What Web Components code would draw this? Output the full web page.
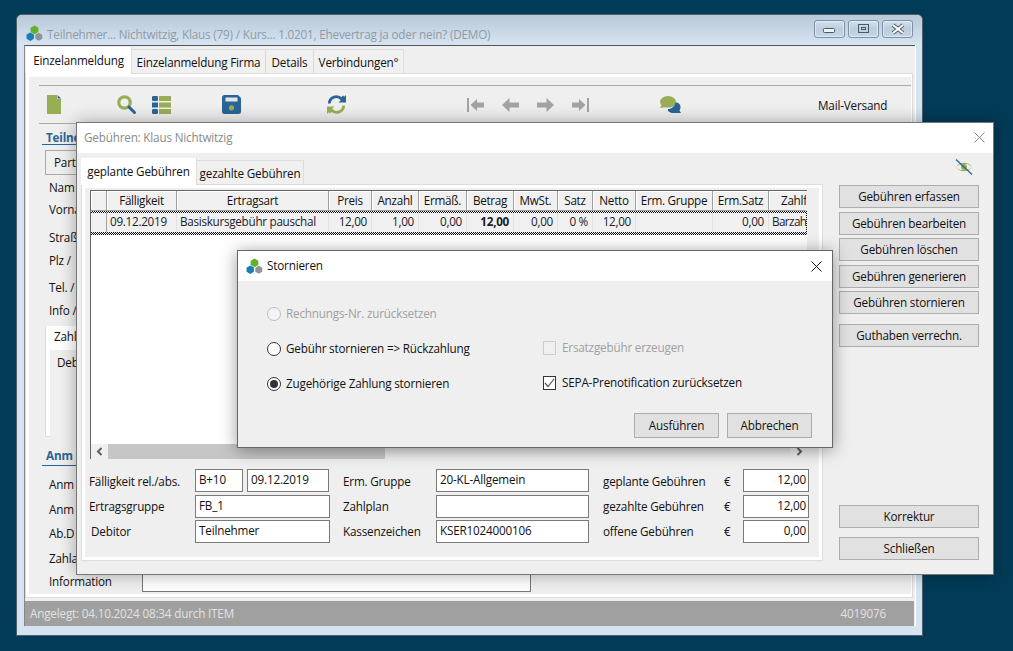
<!DOCTYPE html>
<html lang="de"><head><meta charset="utf-8"><title>Teilnehmer</title>
<style>
html,body{margin:0;padding:0;background:#023b57}
body{font:11.7px/16px "Open Sans","Noto Sans",sans-serif;letter-spacing:-.18px;color:#111}
</style></head><body>
<x-desktop>
  <main-window slot="w" style="left:16px;top:14px;width:907px;height:622px" heading="Teilnehmer... Nichtwitzig, Klaus (79) / Kurs... 1.0201, Ehevertrag ja oder nein? (DEMO)">
    <x-tabs>
      <x-tab active w="106">Einzelanmeldung</x-tab><x-tab w="134">Einzelanmeldung Firma</x-tab><x-tab w="48">Details</x-tab><x-tab w="90">Verbindungen°</x-tab>
    </x-tabs>
    <main-form></main-form>
    <x-status><span>Angelegt: 04.10.2024 08:34 durch ITEM</span><span slot="end">4019076</span></x-status>
  </main-window>
  <fee-dialog slot="w" style="left:76px;top:122px;width:918px;height:453px"></fee-dialog>
  <storno-dialog slot="w" style="left:237px;top:250px;width:596px;height:198px"></storno-dialog>
</x-desktop>
<script>
function def(name, css, html, init){
  customElements.define(name, class extends HTMLElement{
    constructor(){super();this.attachShadow({mode:'open'});}
    connectedCallback(){
      if(this.shadowRoot.firstChild)return;
      const h = typeof html==='function'?html(this):html;
      this.shadowRoot.innerHTML='<style>'+css+'</style>'+h;
      if(init)init(this);
    }
  });
}
const G='#98ae55',B='#2b6496',N='#a3a3a3';
const hex=(x,y,r,c)=>{let p=[];for(let i=0;i<6;i++){const a=Math.PI/3*i+Math.PI/6;p.push((x+r*Math.cos(a)).toFixed(2)+','+(y+r*Math.sin(a)).toFixed(2));}return `<polygon points="${p.join(' ')}" fill="${c}"/>`;};
const ICONS={
 logo:['0 0 16 16',hex(8,4.6,4.2,'#5fb22c')+hex(12,11,3.8,'#8f9499')+hex(4,11,4,'#1a7fb5')],
 doc:['0 0 14 19',`<path d="M0 0H10V4H14V19H0Z" fill="${G}"/><path d="M10.6 0L14 3.4H10.6Z" fill="${B}"/>`],
 search:['0 0 19 19',`<circle cx="7.5" cy="7.5" r="5.7" fill="none" stroke="${G}" stroke-width="3.2"/><path d="M12 12L17.5 17.5" stroke="${B}" stroke-width="3" stroke-linecap="round"/>`],
 list:['0 0 19 18',`<rect x="0" y="0" width="6" height="5" rx="1.2" fill="${B}"/><rect x="0" y="6.5" width="6" height="5" fill="${B}"/><rect x="0" y="13" width="6" height="5" rx="1.2" fill="${B}"/><rect x="7" y="0" width="12" height="5" fill="${G}"/><rect x="7" y="6.5" width="12" height="5" fill="${G}"/><rect x="7" y="13" width="12" height="5" fill="${G}"/>`],
 save:['0 0 19 19',`<path d="M2.5 0H16L19 3V16.5A2.5 2.5 0 0 1 16.500 19H2.500A2.500 2.500 0 0 1 0 16.500V2.500A2.500 2.500 0 0 1 2.500 0Z" fill="${B}"/><rect x="3.500" y="2.500" width="12" height="4" fill="#dfe6ec"/><circle cx="9.500" cy="12.800" r="2.600" fill="${G}"/>`],
 sync:['0 0 19 19',`<path d="M2.300 8.500A7 7 0 0 1 14.500 4L17 1.500" fill="none" stroke="${B}" stroke-width="2.800"/><path d="M19 0V7.500H11.500Z" fill="${B}"/><path d="M16.700 10.500A7 7 0 0 1 4.500 15L2 17.500" fill="none" stroke="${G}" stroke-width="2.800"/><path d="M0 19V11.500H7.500Z" fill="${G}"/>`],
 first:['0 0 17 14',`<rect x="0" y="0" width="2" height="14" fill="${N}"/><path d="M3.500 7L10 1V4.500H17V9.500H10V13Z" fill="${N}"/>`],
 prev:['0 0 17 14',`<path d="M0 7L7.500 0V4.500H17V9.500H7.500V14Z" fill="${N}"/>`],
 next:['0 0 17 14',`<path d="M17 7L9.500 0V4.500H0V9.500H9.500V14Z" fill="${N}"/>`],
 last:['0 0 17 14',`<rect x="15" y="0" width="2" height="14" fill="${N}"/><path d="M13.500 7L7 1V4.500H0V9.500H7V13Z" fill="${N}"/>`],
 chat:['0 0 21 17',`<ellipse cx="8" cy="5.800" rx="8" ry="5.800" fill="${G}"/><path d="M2 8.500L0 12L6 11Z" fill="${G}"/><path d="M15.500 6.500C18.500 6.500 20.500 8.500 20.500 11C20.500 12.500 20 13.500 19.500 14.500L21 17H13.500C10 17 7 15 8 13C11 13 14.500 11 15.500 6.500Z" fill="${B}"/>`],
 eye:['0 0 18 16',`<path d="M1 8C4 3 13 2 17 8C15.500 6.500 14 5.500 12 5L5 5.500C3.500 6 2 7 1 8Z" fill="${G}"/><path d="M17 8C14 13 5 14 1 8C2.500 9.500 4 10.500 6 11L13 10.500C14.500 10 16 9 17 8Z" fill="${G}"/><circle cx="9" cy="8" r="3" fill="${G}"/><path d="M1 0.500L17 15.500" stroke="${B}" stroke-width="1.300"/>`],
 close:['0 0 11 11','<path d="M.5 .5L10.500 10.500M10.500 .5L.5 10.500" stroke="currentColor" stroke-width="1" fill="none"/>'],
};
def('x-icon',':host{display:inline-block;line-height:0}svg{display:block;width:100%;height:100%;overflow:visible}',
 el=>{const i=ICONS[el.getAttribute('name')];return `<svg viewBox="${i[0]}" xmlns="http://www.w3.org/2000/svg">${i[1]}</svg>`;});

def('x-desktop',':host{display:block;position:relative;width:1013px;height:651px;background:#023b57;overflow:hidden}','<slot name="w"></slot>');

def('win-ctl',`:host{display:flex;align-items:center;justify-content:center;width:29px;height:16px;border:1px solid #7c90a6;border-radius:3px;background:linear-gradient(#d3dfeb,#bccddf 50%,#c6d6e6);box-shadow:inset 0 0 0 1px rgba(255,255,255,.45)}`,'<slot></slot>');

def('main-window',`:host{display:flex;flex-direction:column;position:absolute;box-sizing:border-box;border:1px solid #4f5f6b;border-radius:6px 6px 0 0;background:#d6e3f1}
 .tb{flex:none;height:30px;display:flex;align-items:center;background:linear-gradient(#b8c8d7,#d7e4f2);border-radius:5px 5px 0 0;padding:0 9px 0 9px}
 .t{flex:1;margin-left:4px;color:#8f9ba6;white-space:nowrap;padding-top:7px}
 x-icon.l{width:17px;height:17px;margin-top:6px}
 .c{display:flex;gap:3px;margin-top:-3px}
 .cl{flex:1;min-height:0;display:flex;flex-direction:column;margin:0 7px 9px 7px;border-top:1px solid #555;border-left:1px solid #888;background:#efefef;box-shadow:1px 0 0 #fff}
 svg{display:block}`,
 el=>`<div class="tb"><x-icon class="l" name="logo"></x-icon><span class="t">${el.getAttribute('heading')}</span>
 <div class="c"><win-ctl><svg width="16" height="10"><rect x="1.500" y="4.500" width="11" height="4" fill="#eef3f8" stroke="#4c5a68" rx="1"/></svg></win-ctl>
 <win-ctl><svg width="12" height="10"><rect x=".5" y=".5" width="10" height="8" fill="none" stroke="#4c5a68"/><rect x="3.500" y="3.500" width="4" height="2" fill="none" stroke="#4c5a68"/></svg></win-ctl>
 <win-ctl><svg width="14" height="12"><path d="M2 2L12 10M12 2L2 10" stroke="#4c5a68" stroke-width="4"/><path d="M2 2L12 10M12 2L2 10" stroke="#fff" stroke-width="2.200"/></svg></win-ctl></div></div>
 <div class="cl"><slot></slot></div>`);

def('x-tabs',':host{display:flex;align-items:flex-end;flex:none;padding-left:var(--tabs-left,1px);height:var(--tabs-h,27px);position:relative;z-index:1}','<slot></slot>');
def('x-tab',`:host{display:flex;box-sizing:border-box;align-items:center;justify-content:center;height:25px;padding-top:1px;border:1px solid #dcdcdc;border-left:0;background:#f0f0f0;white-space:nowrap;margin-bottom:-1px;border-bottom:1px solid #dcdcdc}
 :host([active]){height:27px;background:#fff;border:0;border-right:1px solid #dcdcdc;padding:0 0 1px;margin-bottom:-1px}`,
 '<slot></slot>',el=>{el.style.width=el.getAttribute('w')+'px';});

def('tab-page',`:host{display:flex;flex-direction:column;box-sizing:border-box;border:1px solid #dcdcdc;background:#fff;padding:3px 1px 3px 3px}
 .i{flex:1;min-height:0;background:#efefef;display:flex;flex-direction:column}`,'<div class="i"><slot></slot></div>');

def('x-line',`:host{display:block;white-space:nowrap;height:20px;line-height:20px}`,'<slot></slot>');

def('main-form',`:host{flex:1;min-height:0;display:flex;flex-direction:column;margin:0 2px 3px 0}
 tab-page{flex:1;min-height:0}
 .tool{flex:none;display:flex;align-items:center;height:37px;margin:8px 0 0 10px;border-top:1px solid #aaa;border-bottom:1px solid #aaa}
 .tool x-icon{flex:none}
 .mail{margin-left:137px;white-space:nowrap}
 .f{flex:1;display:flex;flex-direction:column;padding-left:20px}
 .h{flex:none;color:#2b6496;font-weight:700;margin:3px 0 0 -7px;padding-left:4px;border-bottom:1px solid #2b6496;height:17px;line-height:21px;width:200px}
 .h.two{height:18px;line-height:17px;margin-top:10px}
 x-line{flex:none}
 .part{box-sizing:border-box;flex:none;height:25px;width:200px;margin:5px 0 0 -4px;padding-left:8px;border:1px solid #aaa;line-height:23px}
 .box{flex:none;box-sizing:border-box;width:200px;height:111px;margin:6px 0 0 -4px;background:#fff;padding:0 0 0 4px;border:1px solid #dcdcdc;border-top:0}
 .box .a{height:24px;line-height:20px;padding-left:4px}
 .box .b{height:84px;background:#efefef;padding:4px 0 0 7px}
 .last{display:flex}
 .lb{flex:none;display:block;width:93px}
 .inp{flex:none;display:block;width:389px;height:21px;box-sizing:border-box;background:#fff;border:1px solid #777}
 `,`<tab-page>
 <div class="tool">
  <x-icon name="doc" style="width:14px;height:19px;margin-left:8px"></x-icon>
  <x-icon name="search" style="width:19px;height:19px;margin-left:56px"></x-icon>
  <x-icon name="list" style="width:19px;height:18px;margin-left:16px"></x-icon>
  <x-icon name="save" style="width:19px;height:19px;margin-left:51px"></x-icon>
  <x-icon name="sync" style="width:19px;height:19px;margin-left:86px"></x-icon>
  <x-icon name="first" style="width:17px;height:14px;margin-left:121px"></x-icon>
  <x-icon name="prev" style="width:17px;height:14px;margin-left:18px"></x-icon>
  <x-icon name="next" style="width:17px;height:14px;margin-left:18px"></x-icon>
  <x-icon name="last" style="width:17px;height:14px;margin-left:18px"></x-icon>
  <x-icon name="chat" style="width:21px;height:17px;margin-left:71px"></x-icon>
  <span class="mail">Mail-Versand</span>
 </div>
 <div class="f">
  <div class="h">Teilne</div>
  <div class="part">Part</div>
  <x-line style="margin-top:2px">Nam</x-line>
  <x-line style="margin-top:2px">Vorna</x-line>
  <x-line style="margin-top:8px">Straß</x-line>
  <x-line style="margin-top:3px">Plz /</x-line>
  <x-line style="margin-top:7px">Tel. /</x-line>
  <x-line style="margin-top:3px">Info /</x-line>
  <div class="box"><div class="a">Zahl</div><div class="b">Deb</div></div>
  <div class="h two">Anm</div>
  <x-line style="margin-top:8px">Anm</x-line>
  <x-line style="margin-top:5px">Anm</x-line>
  <x-line style="margin-top:4px">Ab.D</x-line>
  <x-line style="margin-top:5px">Zahla</x-line>
  <x-line class="last" style="margin-top:3px;display:flex"><span class="lb">Information</span><span class="inp"></span></x-line>
 </div></tab-page>`);

def('x-status',`:host{flex:none;display:flex;justify-content:space-between;height:25px;line-height:25px;margin:0 1px 0 0;background:#a0a0a0;color:#e2e2e2;padding:0 28px 0 5px;box-sizing:border-box}`,'<slot></slot><slot name="end"></slot>');

def('x-btn',`:host{display:flex;align-items:center;justify-content:center;box-sizing:border-box;background:#e1e1e1;border:1px solid #adadad;white-space:nowrap;height:23px;padding-bottom:2px}`,'<slot></slot>');
def('x-field',`:host{display:block;box-sizing:border-box;height:23px;background:#fff;border:1px solid #7a7a7a;padding:0 3px;line-height:18px;white-space:nowrap;overflow:hidden}
 :host([right]){text-align:right;padding-right:2px}`,'<slot></slot>');

const COLS=[[16,'',''],[70,'Fälligkeit','09.12.2019','l'],[152,'Ertragsart','Basiskursgebühr pauschal','l'],[43,'Preis','12,00'],[47,'Anzahl','1,00'],[48,'Ermäß.','0,00'],[47,'Betrag','12,00','b'],[44,'MwSt.','0,00'],[35,'Satz','0 %'],[43,'Netto','12,00'],[77,'Erm. Gruppe',''],[56,'Erm.Satz','0,00'],[37,'Zahlf','Barzah','l tight']];
def('fee-table',`:host{display:flex;flex-direction:column;box-sizing:border-box;width:717px;height:269px;margin-left:5px;background:#fff;border-left:1px solid #666;border-top:1px solid #666;overflow:hidden;letter-spacing:-.28px}
 .r{display:grid;grid-template-columns:${COLS.map(c=>c[0]+'px').join(' ')};flex:none}
 .head{height:20px;background:#f0f0f0}
 .head div{border-right:1px solid #a0a0a0;border-bottom:1px solid #a0a0a0;box-shadow:inset 1px 1px 0 #fff;text-align:center;line-height:18px;white-space:nowrap;overflow:hidden;color:#111}
 .head div:last-child{border-right:0;text-align:left;padding-left:12px}
 .row{height:24px;box-sizing:border-box;padding:2px 1px 3px 0;background:repeating-conic-gradient(#111 0 25%,#ececec 0 50%) 0 0/2px 2px}
 .row div{background:#f0f0f0;border-right:1px solid #e2e2e2;text-align:right;padding-right:4px;line-height:17px;height:19px;white-space:nowrap;overflow:hidden;box-sizing:border-box;color:#1c1c2a}
 .row div.l{text-align:left;padding:0 0 0 3px}
 .row div.tight{letter-spacing:-.6px}
 .row div.b{font-weight:700}
 .row div:first-child{border-right:1px solid #a0a0a0}
 .row div:last-child{border-right:0}
 .sp{flex:1}
 .sb{flex:none;height:15px;display:flex;background:linear-gradient(#dcdcdc,#f0f0f0);align-items:center}
 .ar{flex:none;width:17px;height:15px;background:#efefef;display:flex;align-items:center;justify-content:center}
 .th{flex:none;width:277px;height:15px;background:#c6c6c6}
 .tr{flex:1}
 svg{display:block}`,
 `<div class="r head">${COLS.map(c=>`<div>${c[1]}</div>`).join('')}</div>
  <div class="r row">${COLS.map(c=>`<div class="${c[3]||''}">${c[2]}</div>`).join('')}</div>
  <div class="sp"></div>
  <div class="sb"><div class="ar"><svg width="8" height="9"><path d="M5.500 1L2 4.500L5.500 8" fill="none" stroke="#606060" stroke-width="2"/></svg></div><div class="th"></div><div class="tr"></div><div class="ar"><svg width="8" height="9"><path d="M2.500 1L6 4.500L2.500 8" fill="none" stroke="#606060" stroke-width="2"/></svg></div></div>`);

def('fee-dialog',`:host{display:flex;flex-direction:column;position:absolute;box-sizing:border-box;background:#efefef;border:1px solid #777;box-shadow:0 0 16px rgba(0,0,0,.32)}
 .tb{flex:none;height:30px;background:#fff;display:flex;align-items:center;justify-content:space-between;padding:0 8px 2px 7px;box-sizing:border-box;color:#8a8a8a}
 .tb x-icon{width:11px;height:11px;color:#8a8a8a}
 .b{flex:1;min-height:0;display:flex}
 .l{flex:none;width:742px;margin-left:4px;display:flex;flex-direction:column;--tabs-left:0px;--tabs-h:31px}
 tab-page{flex:1;min-height:0;margin-bottom:13px;padding-right:3px;}
 .r{flex:none;width:140px;margin-left:16px;display:flex;flex-direction:column}
 .eye{height:32px;display:flex;justify-content:flex-end;align-items:flex-start;padding:6px 6px 0 0;box-sizing:border-box}
 .eye x-icon{width:18px;height:16px}
 .r x-btn{flex:none}
 .g{display:grid;grid-template-columns:106px 135px 13px 93px 153px 14px 121px 19px 66px;grid-template-rows:26px 25px 23px;margin:10px 0 0 4px;align-items:start}
 .g span{line-height:24px;white-space:nowrap}
 .g span.u{line-height:22px}
 .two{display:flex;gap:4px}.two x-field:first-child{width:48px}.two x-field:last-child{width:82px}
 i{display:block}`,
 `<div class="tb"><span>Gebühren: Klaus Nichtwitzig</span><x-icon name="close"></x-icon></div>
 <div class="b">
  <div class="l">
   <x-tabs><x-tab active w="116">geplante Gebühren</x-tab><x-tab w="107">gezahlte Gebühren</x-tab></x-tabs>
   <tab-page>
    <fee-table style="margin-top:2px"></fee-table>
    <div class="g">
     <span>Fälligkeit rel./abs.</span><div class="two"><x-field>B+10</x-field><x-field>09.12.2019</x-field></div><i></i><span>Erm. Gruppe</span><x-field>20-KL-Allgemein</x-field><i></i><span>geplante Gebühren</span><span>€</span><x-field right>12,00</x-field>
     <span class="u">Ertragsgruppe</span><x-field>FB_1</x-field><i></i><span class="u">Zahlplan</span><x-field></x-field><i></i><span class="u">gezahlte Gebühren</span><span class="u">€</span><x-field right>12,00</x-field>
     <span class="u" style="padding-left:2px">Debitor</span><x-field>Teilnehmer</x-field><i></i><span class="u">Kassenzeichen</span><x-field>KSER1024000106</x-field><i></i><span class="u">offene Gebühren</span><span class="u">€</span><x-field right>0,00</x-field>
    </div>
   </tab-page>
  </div>
  <div class="r">
   <div class="eye"><x-icon name="eye"></x-icon></div>
   <x-btn>Gebühren erfassen</x-btn>
   <x-btn style="margin-top:4px">Gebühren bearbeiten</x-btn>
   <x-btn style="margin-top:3px">Gebühren löschen</x-btn>
   <x-btn style="margin-top:4px">Gebühren generieren</x-btn>
   <x-btn style="margin-top:3px">Gebühren stornieren</x-btn>
   <x-btn style="margin-top:10px">Guthaben verrechn.</x-btn>
   <x-btn style="margin-top:158px">Korrektur</x-btn>
   <x-btn style="margin-top:9px">Schließen</x-btn>
  </div>
 </div>`);

def('x-radio',`:host{display:flex;align-items:center;height:20px;white-space:nowrap}
 .o{flex:none;box-sizing:border-box;width:14px;height:14px;border-radius:50%;border:1px solid #333;background:#fff;margin-right:5px;display:flex;align-items:center;justify-content:center}
 .o i{width:8px;height:8px;border-radius:50%;background:#333;display:none}
 .s{padding-bottom:2px}
 :host([checked]) .o i{display:block}
 :host([disabled]){color:#a0a0a0}
 :host([disabled]) .o{border-color:#bdbdbd;background:#f4f4f4}`,'<span class="o"><i></i></span><span class="s"><slot></slot></span>');
def('x-check',`:host{display:flex;align-items:center;height:20px;white-space:nowrap;margin-top:-1px}
 .o{flex:none;box-sizing:border-box;width:13px;height:14px;border:1px solid #333;background:#fff;margin-right:6px;display:flex;align-items:center;justify-content:center}
 .s{padding-bottom:2px}
 svg{display:none}
 :host([checked]) svg{display:block}
 :host([disabled]){color:#a0a0a0}
 :host([disabled]) .o{border-color:#ccc;background:#f0f0f0}`,'<span class="o"><svg width="11" height="10"><path d="M1 5L4 8.500L10 1" fill="none" stroke="#555" stroke-width="1.200"/></svg></span><span class="s"><slot></slot></span>');

def('storno-dialog',`:host{display:flex;flex-direction:column;position:absolute;box-sizing:border-box;background:#efefef;border:1px solid #666;box-shadow:0 2px 16px rgba(0,0,0,.4)}
 .tb{flex:none;height:30px;box-sizing:border-box;background:#fff;display:flex;align-items:center;padding:0 10px 0 8px}
 .tb x-icon.l{width:17px;height:17px;margin-right:4px}
 .tb span{flex:1;padding-bottom:2px}
 .tb x-icon.x{width:11px;height:11px;color:#111}
 .g{display:grid;grid-template-columns:276px 1fr;grid-template-rows:20px 20px 20px;row-gap:15px;padding:23px 0 0 29px}
 .a{display:flex;justify-content:flex-end;gap:8px;padding:19px 20px 0 0}
 .a x-btn{width:85px;height:25px}`,
 `<div class="tb"><x-icon class="l" name="logo"></x-icon><span>Stornieren</span><x-icon class="x" name="close"></x-icon></div>
 <div class="g">
  <x-radio disabled>Rechnungs-Nr. zurücksetzen</x-radio><div></div>
  <x-radio>Gebühr stornieren =&gt; Rückzahlung</x-radio><x-check disabled>Ersatzgebühr erzeugen</x-check>
  <x-radio checked>Zugehörige Zahlung stornieren</x-radio><x-check checked>SEPA-Prenotification zurücksetzen</x-check>
 </div>
 <div class="a"><x-btn>Ausführen</x-btn><x-btn>Abbrechen</x-btn></div>`);
</script>
</body></html>
